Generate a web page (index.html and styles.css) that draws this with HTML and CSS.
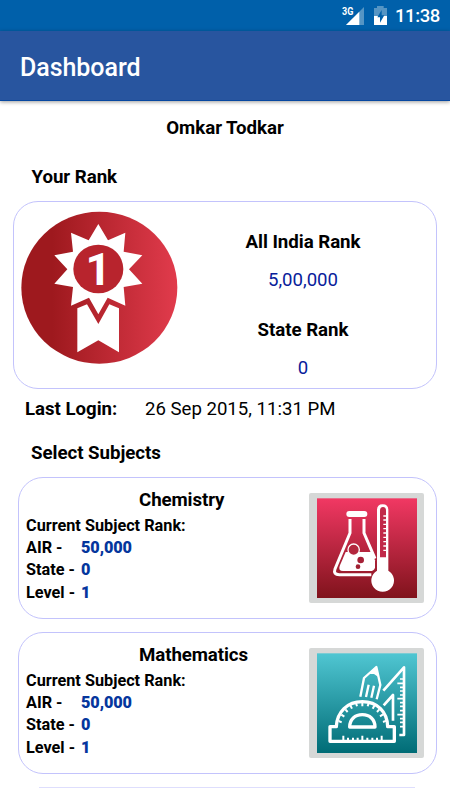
FILE: index.html
```html
<!DOCTYPE html>
<html lang="en">
<head>
<meta charset="utf-8">
<title>Dashboard</title>
<link rel="stylesheet" href="styles.css">
</head>
<body>
<div class="status">
  <svg class="status-icons" viewBox="0 0 150 93" width="50" height="31">
    <text class="net" x="6" y="45" textLength="34" lengthAdjust="spacingAndGlyphs">3G</text>
    <path d="M72 21V75H18Z" fill="#5595c4"/>
    <path d="M58 35V75H18Z" fill="#fff"/>
    <path d="M102 24h9v-6h20v6h10v24h-39z" fill="#5595c4"/>
    <path d="M102 48h39v27h-39z" fill="#fff"/>
    <path d="M125 30L112 52h8v16l13-22h-8z" fill="#0060aa"/>
  </svg>
  <span class="clock">11:38</span>
</div>
<header class="appbar"><h1>Dashboard</h1></header>
<main>
  <div class="name">Omkar Todkar</div>
  <h2 class="rank-heading">Your Rank</h2>
  <section class="card rank-card">
    <svg class="medal" viewBox="30 45 474 465" width="158" height="155">
      <defs><linearGradient id="red"><stop offset=".2" stop-color="#9e191e"/><stop offset="1" stop-color="#e13b4c"/></linearGradient></defs>
      <ellipse cx="268" cy="278" rx="234" ry="228" fill="url(#red)"/>
      <path fill="#fff" d="M265 87l29 49 52-23-5 57 56 11-40 42 40 43-56 10 5 56-53-24-28 50-28-50-54 24 6-56-56-10 39-43-39-42 56-11-6-57 53 23z"/>
      <ellipse cx="265" cy="222" rx="75" ry="73" fill="#b8242d"/>
      <path fill="#fff" d="M202 340l29-12 34 59 33-59 29 12v132l-62-36-63 36z"/>
      <text class="medal-number" x="265" y="270">1</text>
    </svg>
    <div class="ranks">
      <h3>All India Rank</h3><p>5,00,000</p>
      <h3>State Rank</h3><p>0</p>
    </div>
  </section>
  <div class="login"><b>Last Login:</b><span>26 Sep 2015, 11:31 PM</span></div>
  <h2 class="subjects-heading">Select Subjects</h2>
  <section class="card subject">
    <div class="details">
      <h3>Chemistry</h3>
      <div>Current Subject Rank:</div>
      <div class="row"><span>AIR -</span><b>50,000</b></div>
      <div class="row"><span>State -</span><b>0</b></div>
      <div class="row"><span>Level -</span><b>1</b></div>
    </div>
    <svg class="tile" viewBox="27 69 345 330" width="115" height="110">
      <defs><linearGradient id="pink" x2="0" y2="1"><stop stop-color="#f13863"/><stop offset="1" stop-color="#80131c"/></linearGradient></defs>
      <rect x="27" y="69" width="345" height="330" rx="6" fill="#d6d8d7"/>
      <rect x="51" y="85" width="300" height="299" fill="url(#pink)"/>
      <rect x="139" y="123" width="63" height="18" rx="9" fill="#fff"/>
      <path d="M150 147v42l-45 108q-6 17 13 17h96M192 147v42l33 77" fill="none" stroke="#fff" stroke-width="9"/>
      <path d="M137 246h77l11 25v22q-3 10-15 10h-81q-15 0-10-15z" fill="#fff"/>
      <circle cx="161" cy="239" r="17" fill="#b3273e" stroke="#fff" stroke-width="4"/>
      <circle cx="182" cy="270" r="10" fill="#a52036"/><circle cx="174" cy="290" r="7" fill="#a02032"/>
      <path d="M231 302V120q0-17 17-17t17 17v182a34 34 0 1 1-34 0z" fill="#fff"/>
      <path d="M240 262V122q0-11 9-11t9 11v140z" fill="#c12949"/>
      <path d="M250 138h9M250 150h9M250 163h9M250 176h9M250 189h9M250 202h9M250 215h9M250 228h9M250 241h9" stroke="#fff" stroke-width="4"/>
    </svg>
  </section>
  <section class="card subject">
    <div class="details">
      <h3>Mathematics</h3>
      <div>Current Subject Rank:</div>
      <div class="row"><span>AIR -</span><b>50,000</b></div>
      <div class="row"><span>State -</span><b>0</b></div>
      <div class="row"><span>Level -</span><b>1</b></div>
    </div>
    <svg class="tile" viewBox="27 69 345 330" width="115" height="110">
      <defs><linearGradient id="teal" x2="0" y2="1"><stop stop-color="#50c6d2"/><stop offset="1" stop-color="#006c76"/></linearGradient></defs>
      <rect x="27" y="69" width="345" height="330" rx="6" fill="#d6d8d7"/>
      <rect x="51" y="85" width="300" height="299" fill="url(#teal)"/>
      <g fill="none" stroke="#fff" stroke-width="10" stroke-linejoin="round">
        <path d="M90 349v-44h19c2-44 33-75 78-75s75 31 76 75h20v44z"/>
        <path d="M149 306c0-23 16-37 38-37s38 14 38 37z"/>
        <path stroke-width="6" d="M130 332v16M144 338v10M159 338v10M173 338v10M187 332v16M202 338v10M217 338v10M231 338v10M245 332v16"/>
        <path stroke-width="6" d="M116 288l9 4M124 269l9 6M136 253l7 8M151 241l5 10M168 234l3 10M187 232v12M206 234l-3 10M223 242l-5 9M238 253l-7 8M249 268l-9 6M259 287l-10 4"/>
        <path stroke-width="7" d="M181 215l11-56 37-33 12 54-11 43M198 216l8-37M214 218l8-36"/>
        <path stroke-width="8" d="M250 197l62-70v203h-14M251 241l28-31v77"/>
        <path stroke-width="5" d="M300 162h10M292 175h18M300 187h10M300 198h10M300 210h10M292 221h18M300 233h10M300 244h10M300 257h10M292 269h18M300 281h10M300 292h10M300 305h10"/>
      </g>
      <path d="M229 123l-20 24 13 0 14 10z" fill="#fff"/>
    </svg>
  </section>
  <div class="next-card"></div>
</main>
</body>
</html>
```
FILE: styles.css
```css
* { box-sizing: border-box; }
body { margin: 0; height: 800px; overflow: hidden; background: #fff; color: #000; font-family: Roboto, sans-serif; }
h1, h2, h3, p { margin: 0; }
.status { height: 31px; background: #0060aa; color: #fff; display: flex; justify-content: flex-end; align-items: center; padding-right: 10px; }
.status-icons { margin-right: 5px; }
.net { font: 700 33px Roboto, sans-serif; fill: #fff; }
.clock { width: 45px; white-space: nowrap; font-size: 18.5px; line-height: 31px; font-weight: 500; letter-spacing: -.4px; padding-top: 2px; }
.appbar { height: 70px; padding-left: 20px; background: #28559f; border-bottom: 1px solid #0647a0; box-shadow: 0 1px 4px rgba(0,0,0,.4); }
.appbar h1 { color: #fff; font-size: 25px; font-weight: 500; line-height: 73px; letter-spacing: -.05px; }
.name { padding-top: 15px; line-height: 24px; font-size: 18.7px; font-weight: 700; letter-spacing: -.04px; text-align: center; }
h2, h3 { font-size: 18.7px; font-weight: 700; line-height: 24px; letter-spacing: -.04px; }
.rank-heading { margin: 25px 0 12px 31.500px; }
.card { border: 1px solid #c3c3fc; border-radius: 25px; }
.rank-card { height: 188px; margin: 0 13px; display: flex; padding: 8px 0 0 6px; }
.medal { flex: none; }
.medal-number { font: 700 134px Roboto, sans-serif; text-anchor: middle; fill: #fff; }
.ranks { flex: 1; padding: 20px 10px 0 0; margin-left: 2px; text-align: center; }
.ranks p { font-size: 18.6px; line-height: 24px; margin: 14px 0 26px; color: #08209a; }
.login { display: flex; margin: 8px 0 0 25px; font-size: 18.6px; line-height: 24px; }
.login b { width: 120px; }
.subjects-heading { margin: 20px 0 12px 31px; }
.subject { display: flex; height: 142px; margin: 0 13px 13px 18px; padding: 0 12px 0 7px; }
.details { flex: 1; font-size: 16.25px; font-weight: 700; line-height: 22.2px; padding-top: 10px; }
.details h3 { text-align: left; padding-left: 113px; margin-bottom: 3px; letter-spacing: -.1px; }
.row { display: flex; }
.row span { width: 55px; }
.row b { color: #05369d; letter-spacing: -.1px; }
.tile { flex: none; margin-top: 15px; }
.next-card { height: 1px; margin: 0 35px 0 39px; background: #dedefd; }
```
